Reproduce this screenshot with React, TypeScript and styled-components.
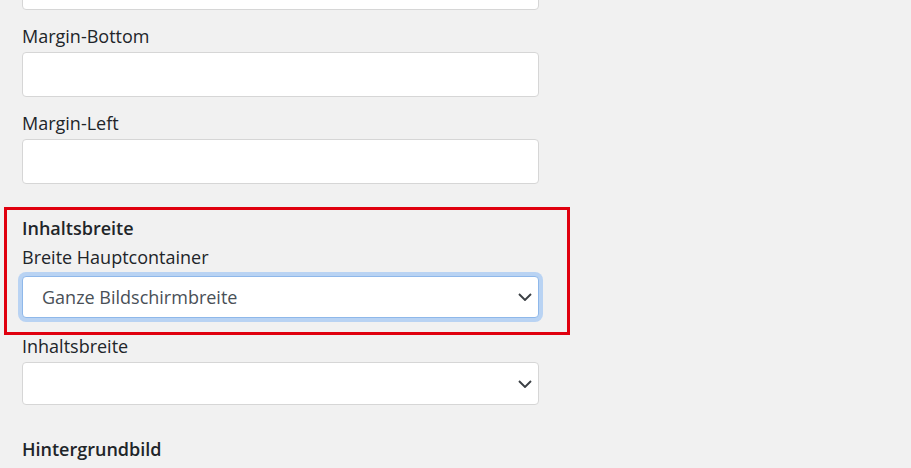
import React from "react";
import styled, { createGlobalStyle } from "styled-components";

const GlobalStyle = createGlobalStyle`
  html, body {
    margin: 0;
    padding: 0;
    background: #f1f1f1;
    overflow: hidden;
  }
  body {
    font-family: "Open Sans", "Noto Sans", sans-serif;
  }
`;

const Page = styled.div`
  width: 911px;
  height: 468px;
  padding-left: 22px;
  box-sizing: border-box;
  overflow: hidden;
`;

const Column = styled.div`
  width: 517px;
  display: flex;
  flex-direction: column;
`;

const Field = styled.div<{ $first?: boolean }>`
  display: flex;
  flex-direction: column;
  margin-top: ${(p) => (p.$first ? "-35px" : "0")};
  margin-bottom: 13px;
`;

const Label = styled.label`
  display: block;
  font-size: 18px;
  line-height: 27px;
  color: #212529;
  margin-bottom: 2px;
`;

const Heading = styled.div`
  font-size: 18px;
  line-height: 27px;
  font-weight: 600;
  color: #212529;
  margin-bottom: 2px;
`;

const Section = styled.div`
  margin-top: 18px;
`;

const TextInput = styled.input`
  box-sizing: border-box;
  width: 100%;
  height: 45px;
  margin: 0;
  background: #fff;
  border: 1px solid #d6d6d6;
  border-radius: 4px;
  outline: none;
`;

const SelectBox = styled.div<{ $focused?: boolean }>`
  box-sizing: border-box;
  width: 100%;
  height: ${(p) => (p.$focused ? "42px" : "43px")};
  margin-top: ${(p) => (p.$focused ? "3px" : "0")};
  margin-bottom: ${(p) => (p.$focused ? "2px" : "0")};
  display: flex;
  align-items: center;
  justify-content: space-between;
  padding: 0 6px 0 19px;
  background: #fff;
  border: 1px solid ${(p) => (p.$focused ? "#8fb8ea" : "#d6d6d6")};
  border-radius: 4px;
  box-shadow: ${(p) => (p.$focused ? "0 0 0 4px #b9d3f3" : "none")};
  font-size: 18px;
  color: #495057;
`;

const Group = styled(Section)`
  position: relative;
  display: flex;
  flex-direction: column;
`;

// red annotation frame drawn over the group
const Highlight = styled.div`
  position: absolute;
  left: -18px;
  right: -31px;
  top: -8px;
  bottom: -2px;
  border: 3px solid #e0000f;
  pointer-events: none;
`;

const Chevron = () => (
  <svg width="14" height="8" viewBox="0 0 14 8" fill="none">
    <path d="M1 1l6 6 6-6" stroke="#3a3f44" strokeWidth="1.9" />
  </svg>
);

export default function App() {
  return (
    <>
      <GlobalStyle />
      <Page>
        <Column>
          <Field $first>
            <TextInput />
          </Field>
          <Field>
            <Label>Margin-Bottom</Label>
            <TextInput />
          </Field>
          <Field>
            <Label>Margin-Left</Label>
            <TextInput />
          </Field>
          <Group>
            <Heading>Inhaltsbreite</Heading>
            <Field>
              <Label>Breite Hauptcontainer</Label>
              <SelectBox $focused>
                <span>Ganze Bildschirmbreite</span>
                <Chevron />
              </SelectBox>
            </Field>
            <Highlight />
          </Group>
          <Field>
            <Label>Inhaltsbreite</Label>
            <SelectBox>
              <span />
              <Chevron />
            </SelectBox>
          </Field>
          <Section>
            <Heading>Hintergrundbild</Heading>
          </Section>
        </Column>
      </Page>
    </>
  );
}
